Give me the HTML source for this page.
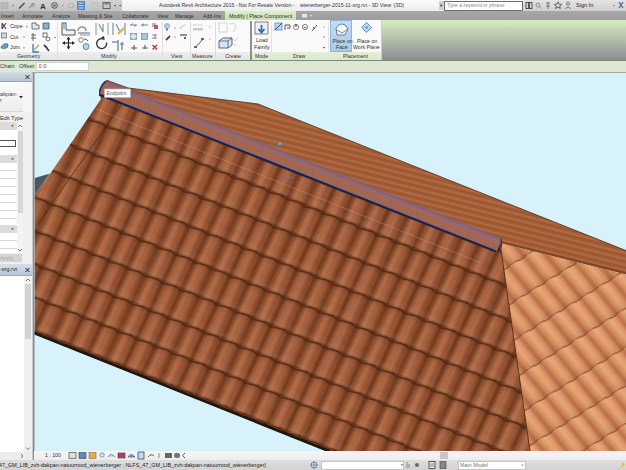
<!DOCTYPE html>
<html><head><meta charset="utf-8">
<style>
*{margin:0;padding:0;box-sizing:border-box}
html,body{width:626px;height:470px;overflow:hidden;background:#e8e8e8;font-family:"Liberation Sans",sans-serif;color:#333}
.a{position:absolute}
.t{position:absolute;white-space:nowrap;line-height:1}
</style></head><body>
<!-- title bar -->
<div class="a" style="left:0;top:0;width:626px;height:11px;background:linear-gradient(#fafafa,#ededed)"></div>
<div class="a" style="left:0;top:0;width:122px;height:11px;background:linear-gradient(#d2d2d2,#c2c2c2)"></div>
<svg class="a" style="left:0;top:0" width="130" height="11">
<rect x="1" y="2.5" width="7" height="6" fill="#b9b9b9" stroke="#aaa" stroke-width="0.6"/>
<path d="M12,5 l2,0 l-1,1.5z" fill="#666"/>
<path d="M19,8.5 L24.5,3" stroke="#444" stroke-width="1.2"/>
<path d="M29,8 L34,3.5" stroke="#777" stroke-width="1"/><circle cx="33" cy="5" r="1.6" fill="none" stroke="#888" stroke-width="0.7"/>
<text x="40" y="9" font-family="Liberation Sans" font-weight="bold" font-size="8" fill="#333">A</text>
<circle cx="54.5" cy="5.5" r="2.8" fill="none" stroke="#555" stroke-width="1"/><rect x="53.5" y="4.5" width="2" height="2" fill="#555"/>
<circle cx="63" cy="5.5" r="0.6" fill="#777"/>
<circle cx="71" cy="5.5" r="2.5" fill="none" stroke="#aaa" stroke-width="0.8"/>
<rect x="77" y="1" width="8" height="9" fill="#4f86c6"/><path d="M78.5,3 h5 M78.5,5.5 h5 M78.5,8 h5" stroke="#dfeeff" stroke-width="0.9"/>
<rect x="92" y="3" width="6" height="6" fill="none" stroke="#bbb" stroke-width="0.7"/>
<rect x="103" y="2.5" width="7" height="6" fill="none" stroke="#555" stroke-width="0.9"/><rect x="104.5" y="2.5" width="4" height="2" fill="#777"/>
<path d="M114,5 l2.4,0 l-1.2,1.6z" fill="#555"/>
<path d="M119,5 l2.4,0 l-1.2,1.6z" fill="#555"/>
</svg>
<div class="t" style="left:159px;top:2.5px;font-size:5.1px;color:#333">Autodesk Revit Architecture 2015 - Not For Resale Version -</div>
<div class="t" style="left:300px;top:2.5px;font-size:5.2px;color:#333">wienerberger-2015-11-org.rvt - 3D View: {3D}</div>
<div class="a" style="left:439px;top:1px;width:5px;height:9px;background:#d0d0d0"></div>
<svg class="a" style="left:439px;top:1px" width="5" height="9"><path d="M1.5,3 l2,1.5 l-2,1.5z" fill="#444"/></svg>
<div class="a" style="left:444px;top:0.5px;width:79px;height:10px;background:#fff;border:1px solid #6d6d6d"></div>
<div class="t" style="left:447px;top:3px;font-size:5px;color:#8a8a8a;font-style:italic">Type a keyword or phrase</div>
<div class="a" style="left:523px;top:0;width:103px;height:11px;background:linear-gradient(#e4e4e4,#cfcfcf)"></div>
<svg class="a" style="left:524px;top:0" width="100" height="11">
<rect x="2" y="2.5" width="2.6" height="6" fill="none" stroke="#444" stroke-width="0.9"/><rect x="5.4" y="2.5" width="2.6" height="6" fill="none" stroke="#444" stroke-width="0.9"/>
<circle cx="14" cy="5" r="2" fill="none" stroke="#777" stroke-width="0.8"/><path d="M15.5,6.5 l2,2" stroke="#777" stroke-width="0.9"/>
<path d="M24,2 v7 M22,3 h4 M22,6 h4" stroke="#666" stroke-width="0.8"/>
<path d="M34,1.8 l1.1,2.4 2.5,0.2 -1.9,1.6 0.6,2.5 -2.3,-1.4 -2.3,1.4 0.6,-2.5 -1.9,-1.6 2.5,-0.2z" fill="none" stroke="#444" stroke-width="0.8"/>
<circle cx="44" cy="3.6" r="1.5" fill="none" stroke="#555" stroke-width="0.8"/><path d="M41.5,8.5 q2.5,-3 5,0" fill="none" stroke="#555" stroke-width="0.8"/>
<path d="M89,5 l2,0 l-1,1.3z" fill="#666"/>
<path d="M95,2 l4,6 M99,2 l-4,6" stroke="#3b6aa8" stroke-width="1.3"/>
</svg>
<div class="t" style="left:576px;top:3px;font-size:5.6px;color:#222">Sign In</div>
<!-- tab row -->
<div class="a" style="left:0;top:11px;width:626px;height:9px;background:linear-gradient(#a7a7a7,#9c9c9c)"></div>
<div class="a" style="left:225px;top:11px;width:71px;height:9px;background:linear-gradient(#dcefc8,#c8e0b2)"></div>
<div class="t" style="left:1px;top:13.5px;font-size:5.2px;color:#2e2e2e">Insert</div>
<div class="t" style="left:22px;top:13.5px;font-size:5.2px;color:#2e2e2e">Annotate</div>
<div class="t" style="left:52px;top:13.5px;font-size:5.2px;color:#2e2e2e">Analyze</div>
<div class="t" style="left:78px;top:13.5px;font-size:5.2px;color:#2e2e2e">Massing &amp; Site</div>
<div class="t" style="left:122px;top:13.5px;font-size:5.2px;color:#2e2e2e">Collaborate</div>
<div class="t" style="left:157px;top:13.5px;font-size:5.2px;color:#2e2e2e">View</div>
<div class="t" style="left:175px;top:13.5px;font-size:5.2px;color:#2e2e2e">Manage</div>
<div class="t" style="left:203px;top:13.5px;font-size:5.2px;color:#2e2e2e">Add-Ins</div>
<div class="t" style="left:229px;top:13.5px;font-size:5.4px;color:#2e2e2e">Modify | Place Component</div>
<svg class="a" style="left:300px;top:11px" width="20" height="9"><rect x="2" y="3" width="5" height="3.5" fill="#e6e6e6"/><path d="M10,4 l2.4,0 l-1.2,1.6z" fill="#eee"/></svg>
<!-- ribbon -->
<div class="a" style="left:0;top:20px;width:626px;height:41px;background:linear-gradient(#d4ecc2 0,#cfe6bd 10%,#c4d4b6 22%,#b6c2ac 45%,#9ea19b 75%,#8c8d8b 100%)"></div>
<div class="a" style="left:0;top:20px;width:382px;height:41px;background:#fafafa"></div>
<div class="a" style="left:0;top:52px;width:251px;height:8px;background:linear-gradient(#ecebee,#e6e6e6)"></div>
<div class="a" style="left:251px;top:52px;width:131px;height:8px;background:linear-gradient(#e4eed8,#dae8cc)"></div>
<div class="a" style="left:330px;top:20px;width:22px;height:32px;background:linear-gradient(#c4dcf4,#a9c9ec);border:1px solid #8fb3dd"></div>
<div class="a" style="left:57px;top:22px;width:1px;height:37px;background:#dedede"></div>
<div class="a" style="left:162px;top:22px;width:1px;height:37px;background:#dedede"></div>
<div class="a" style="left:190px;top:22px;width:1px;height:37px;background:#dedede"></div>
<div class="a" style="left:215px;top:22px;width:1px;height:37px;background:#dedede"></div>
<div class="a" style="left:250px;top:21px;width:1.5px;height:39px;background:#8c9088"></div>
<div class="a" style="left:271px;top:22px;width:1px;height:37px;background:#e0e6da"></div>
<div class="a" style="left:328px;top:22px;width:1px;height:37px;background:#e0e6da"></div>
<div class="a" style="left:381px;top:20px;width:1px;height:41px;background:#c9d2c0"></div>
<div class="t" style="left:17px;top:54px;font-size:5.3px;color:#333">Geometry</div>
<div class="t" style="left:101px;top:54px;font-size:5.3px;color:#333">Modify</div>
<div class="t" style="left:171px;top:54px;font-size:5.3px;color:#333">View</div>
<div class="t" style="left:192px;top:54px;font-size:5.3px;color:#333">Measure</div>
<div class="t" style="left:225px;top:54px;font-size:5.3px;color:#333">Create</div>
<div class="t" style="left:255px;top:54px;font-size:5.3px;color:#333">Mode</div>
<div class="t" style="left:293px;top:54px;font-size:5.3px;color:#333">Draw</div>
<div class="t" style="left:343px;top:54px;font-size:5.3px;color:#333">Placement</div>
<div class="t" style="left:10px;top:24px;font-size:5.3px;color:#333">Cope</div>
<div class="t" style="left:10px;top:34.5px;font-size:5.3px;color:#333">Cut</div>
<div class="t" style="left:10px;top:45px;font-size:5.3px;color:#333">Join</div>
<div class="t" style="left:256px;top:38px;font-size:5.3px;color:#333">Load</div>
<div class="t" style="left:254px;top:45px;font-size:5.3px;color:#333">Family</div>
<div class="t" style="left:332.5px;top:38.5px;font-size:5.2px;color:#333">Place on</div>
<div class="t" style="left:336px;top:45px;font-size:5.2px;color:#333">Face</div>
<div class="t" style="left:357px;top:38.5px;font-size:5.2px;color:#333">Place on</div>
<div class="t" style="left:353px;top:45px;font-size:5.2px;color:#333">Work Plane</div>
<svg class="a" style="left:0;top:20px" width="382" height="33">
<!-- geometry -->
<path d="M2,3 l4,6 M6,3 l-4,6 M2,3 v6" stroke="#444" stroke-width="1.1"/>
<path d="M26,6.5 l2,0 l-1,1.2z M23,16.5 l2,0 l-1,1.2z M23,27.5 l2,0 l-1,1.2z M54,17 l2,0 l-1,1.2z" fill="#555"/>
<rect x="1.5" y="13" width="5" height="5" fill="#c9d9ea" stroke="#666" stroke-width="0.7"/>
<path d="M1,27 q3,-5 7,-3 v3 q-3,3 -7,1z" fill="#5da0c8" stroke="#3b6f98" stroke-width="0.6"/>
<path d="M32,3 h4 v2 h3 v4 h-7z" fill="#dce8f2" stroke="#555" stroke-width="0.8"/>
<path d="M43,3 h6 v6 h-6z" fill="#8ab0d0" stroke="#456" stroke-width="0.8"/>
<path d="M33,13 v8 M31,15 h5 M31,18 h5" stroke="#555" stroke-width="0.9"/>
<rect x="43" y="13" width="4" height="4" fill="none" stroke="#555" stroke-width="0.8"/><circle cx="48" cy="19" r="2" fill="none" stroke="#555" stroke-width="0.8"/>
<path d="M33,24 v8 h6" fill="none" stroke="#3a74b8" stroke-width="1.3"/><path d="M34,30 l5,-5" stroke="#8cbf40" stroke-width="1.2"/>
<path d="M44,25 l3,3 M46,27 l3,4" stroke="#444" stroke-width="1.8"/>
<!-- modify big -->
<path d="M62,3 v12 h13 v-5 h-9 v-7z" fill="#eef3f8" stroke="#555" stroke-width="1"/><rect x="63" y="4" width="3" height="5" fill="#8fc2e8"/>
<path d="M78,11 q0,-4 4,-4 q4,0 4,4 M78,13 h12" fill="none" stroke="#8a9aa8" stroke-width="1.6"/><path d="M80,15 h10" stroke="#a8b4c0" stroke-width="1.4"/>
<path d="M96,3 v12 M108,3 v12" stroke="#b0b8be" stroke-width="1.5"/><path d="M99,4 l4,8 M103,4 v8" stroke="#7c8a96" stroke-width="1.1"/>
<path d="M113,3 v12 M125,3 v12" stroke="#9aa8b8" stroke-width="1.5"/><path d="M116,4 l4,8" stroke="#7a98c0" stroke-width="1.3"/><path d="M118,14 l6,-6" stroke="#e0b040" stroke-width="2"/>
<path d="M68.5,17 v12 M62.5,23 h12" stroke="#222" stroke-width="1.2"/><path d="M68.5,17 l-2,2.5 h4z M68.5,29 l-2,-2.5 h4z M62.5,23 l2.5,-2 v4z M74.5,23 l-2.5,-2 v4z" fill="#222"/>
<circle cx="81" cy="20" r="2.3" fill="none" stroke="#667" stroke-width="0.8"/><circle cx="86" cy="26.5" r="3" fill="#b8d4ea" stroke="#4a7fae" stroke-width="0.9"/><path d="M84,19 q3,0 4,2" fill="none" stroke="#333" stroke-width="0.8"/>
<path d="M104.5,19.5 a5,5 0 1 0 2,3" fill="none" stroke="#333" stroke-width="1.4"/><path d="M101,17.5 l3,-1.5 l0.5,3z" fill="#333"/>
<path d="M112,22 h7 M118,20 v11" stroke="#8a98a8" stroke-width="1.6"/><path d="M120,24 h4 M122,22 v8" stroke="#6a7888" stroke-width="1.2"/>
<!-- modify small -->
<path d="M130,5 h7 M131,5 l2,-1.5 M136,5 l-2,1.5" stroke="#6688aa" stroke-width="1"/>
<path d="M141,5 h7 M143,3.5 v3" stroke="#6688aa" stroke-width="1"/>
<rect x="152" y="3" width="4" height="4" fill="#e8a0a8"/><rect x="154" y="5" width="4" height="4" fill="#aa6070"/>
<rect x="130.5" y="13.5" width="6" height="6" fill="#b8d0e4" stroke="#6a8aa8" stroke-width="0.7"/><path d="M133.5,13.5 v6 M130.5,16.5 h6" stroke="#fff" stroke-width="0.7"/>
<rect x="141.5" y="13.5" width="6" height="6" fill="#a8c4dc" stroke="#6a8aa8" stroke-width="0.7"/>
<path d="M152,15 h5 M152,18 h5 M155,14 v5" stroke="#777" stroke-width="0.8"/>
<path d="M131,28 h6 M134,25 v5" stroke="#556" stroke-width="1"/>
<path d="M142,28 h6 M145,25 v4" stroke="#4a6a8a" stroke-width="1.2"/>
<path d="M152.5,25 l4.5,4.5 M157,25 l-4.5,4.5" stroke="#d03030" stroke-width="1.3"/>
<!-- view -->
<circle cx="167" cy="6" r="2.5" fill="#a8d0ec" stroke="#6a9ac0" stroke-width="0.6"/><rect x="166" y="8.5" width="2" height="2" fill="#777"/>
<circle cx="175" cy="8" r="0.6" fill="#555"/><circle cx="175" cy="17" r="0.6" fill="#555"/>
<path d="M180,9 q2,-4 6,-4" fill="none" stroke="#ccc" stroke-width="1.2"/>
<path d="M166,20 l4,-4" stroke="#704030" stroke-width="1.8"/>
<path d="M180,15 h7" stroke="#444" stroke-width="1.2"/><circle cx="185" cy="18" r="1" fill="#333"/>
<!-- measure -->
<path d="M193,5 h10" stroke="#aaa" stroke-width="0.8" stroke-dasharray="1.5 1"/><rect x="193" y="8" width="10" height="2.5" fill="#ccc"/>
<circle cx="210" cy="7" r="0.6" fill="#777"/><circle cx="210" cy="19" r="0.6" fill="#777"/>
<path d="M195,28 l8,-9" stroke="#555" stroke-width="1"/><path d="M194,27 h3 M201,19 h3" stroke="#444" stroke-width="1.3"/>
<!-- create -->
<rect x="219" y="3" width="8" height="9" fill="none" stroke="#ccc" stroke-width="0.8"/>
<path d="M230,4 q3,-2 6,1 q0,5 -3,7" fill="none" stroke="#ccc" stroke-width="0.8"/>
<path d="M219,21 l4,-3 h9 v7 l-4,3 h-9z" fill="#d6e4f2" stroke="#556" stroke-width="0.9"/><path d="M219,21 h9 l4,-3 M228,21 v7" stroke="#556" stroke-width="0.8" fill="none"/>
<path d="M232,18 l3,3 M238,17 l-3,4 M233,25 h4" stroke="#ccc" stroke-width="0.8"/>
<!-- mode -->
<rect x="255" y="2" width="13" height="12" fill="#eee" stroke="#777" stroke-width="0.9"/><path d="M261.5,5 v6 M258.5,9 l3,3.5 3,-3.5" stroke="#2a6cc0" stroke-width="1.8" fill="none"/>
<!-- draw -->
<rect x="275" y="3" width="7" height="7" fill="#bcd8f0" stroke="#5a88b8" stroke-width="0.8"/><path d="M275,10 l7,-7" stroke="#2a4a7a" stroke-width="1"/>
<path d="M285,5 h5 v3 h-3 M285,5 v5" fill="none" stroke="#444" stroke-width="0.9"/>
<circle cx="296" cy="7" r="2.6" fill="none" stroke="#666" stroke-width="0.8"/><path d="M296,4 v3" stroke="#444" stroke-width="1"/>
<circle cx="305" cy="7" r="2.6" fill="none" stroke="#666" stroke-width="0.8"/><path d="M303.5,7 l3,1" stroke="#444" stroke-width="0.8"/>
<path d="M312,11 l5,-6 M313,7 l2,2" stroke="#444" stroke-width="0.9"/>
<circle cx="324" cy="7" r="0.6" fill="#666"/><circle cx="324" cy="17" r="0.7" fill="#666"/><path d="M322.8,27 h2.4 l-1.2,1.4z" fill="#444"/>
<!-- placement -->
<path d="M336,8 q4,-6 9,-3 l3,4 l-3,6 h-8 z" fill="#f4f8fc" stroke="#6a7f98" stroke-width="1"/><path d="M337,10 l5,3 l6,-4" fill="none" stroke="#6a7f98" stroke-width="0.9"/>
<path d="M366.5,2.5 l5,5 l-5,5 l-5,-5z" fill="#b9d4ee" stroke="#6a90b8" stroke-width="1"/><circle cx="366.5" cy="7.5" r="1.2" fill="#6a90b8"/>
</svg>
<!-- options bar -->
<div class="a" style="left:0;top:60px;width:626px;height:1px;background:#7c8a78"></div>
<div class="a" style="left:0;top:61px;width:626px;height:11px;background:linear-gradient(#dbe8cf,#dfe8d8)"></div>
<div class="a" style="left:0;top:72px;width:626px;height:1px;background:#a8aca6"></div>
<div class="t" style="left:0;top:64px;font-size:5.6px;color:#333">Chain</div>
<div class="t" style="left:19px;top:64px;font-size:5.6px;color:#333">Offset:</div>
<div class="a" style="left:36px;top:62px;width:53px;height:9px;background:#fff;border:1px solid #d0d0d0"></div>
<div class="t" style="left:38.5px;top:64px;font-size:5.6px;color:#555">0.0</div>
<!-- left panel -->
<div class="a" style="left:0;top:73px;width:34px;height:387px;background:#f0f0f0"></div>
<div class="a" style="left:0;top:72px;width:32px;height:9px;background:linear-gradient(#d3dde7,#b9c6d3)"></div>
<svg class="a" style="left:24px;top:73px" width="8" height="8"><path d="M1.5,2 l4,4 M5.5,2 l-4,4" stroke="#222" stroke-width="1"/></svg>
<div class="a" style="left:0;top:81px;width:32px;height:1px;background:#9aa2aa"></div>
<div class="a" style="left:0;top:82px;width:23px;height:30px;background:linear-gradient(#fbfbfb,#ececec);border-bottom:1px solid #d8d8d8"></div>
<div class="t" style="left:-3px;top:91.5px;font-size:5.6px;color:#444">dakpan-</div>
<div class="t" style="left:0;top:98px;font-size:5.6px;color:#444">r</div>
<svg class="a" style="left:18px;top:95px" width="6" height="5"><path d="M1,1 h4 l-2,2.4z" fill="#333"/></svg>
<div class="a" style="left:23px;top:82px;width:9px;height:30px;background:#f6f6f6"></div>
<div class="t" style="left:0;top:115.5px;font-size:5.6px;color:#333">Edit Type</div>
<div class="a" style="left:0;top:122px;width:17px;height:8px;background:#dcdcdc"></div>
<div class="t" style="left:11px;top:123px;font-size:5px;color:#333">&#171;</div>
<div class="a" style="left:17px;top:122px;width:6px;height:128px;background:#f3f3f3"></div>
<svg class="a" style="left:17px;top:122px" width="6" height="8"><path d="M1,5 l2,-2 l2,2" fill="none" stroke="#555" stroke-width="0.8"/></svg>
<div class="a" style="left:17.5px;top:131px;width:5px;height:82px;background:#d6d6d6"></div>
<div class="a" style="left:0;top:130px;width:17px;height:25px;background:#fff"></div>
<div class="a" style="left:0;top:139.5px;width:16px;height:7px;border:1px solid #555;border-left:none;background:#fff"></div>
<div class="a" style="left:0;top:155px;width:17px;height:8px;background:#dcdcdc"></div>
<div class="t" style="left:11px;top:156px;font-size:5px;color:#333">&#171;</div>
<div class="a" style="left:0;top:163px;width:17px;height:62px;background:repeating-linear-gradient(#fff 0,#fff 7px,#d6d6d6 7px,#d6d6d6 8px)"></div>
<div class="a" style="left:0;top:225px;width:17px;height:8px;background:#dcdcdc"></div>
<div class="t" style="left:11px;top:226px;font-size:5px;color:#333">&#171;</div>
<div class="a" style="left:0;top:233px;width:17px;height:20px;background:repeating-linear-gradient(#fff 0,#fff 7px,#d6d6d6 7px,#d6d6d6 8px)"></div>
<svg class="a" style="left:17px;top:247px" width="6" height="6"><path d="M1,2 l2,2 l2,-2" fill="none" stroke="#555" stroke-width="0.8"/></svg>
<div class="a" style="left:0;top:254px;width:22px;height:8px;background:#d5d5d5"></div>
<div class="t" style="left:0;top:255.5px;font-size:5.4px;color:#aaa">Apply</div>
<div class="a" style="left:0;top:264px;width:32px;height:11px;background:linear-gradient(#d6e0ea,#b8c6d4)"></div>
<div class="t" style="left:0;top:267px;font-size:5.4px;color:#222">-org.rvt</div>
<svg class="a" style="left:24px;top:266px" width="8" height="8"><path d="M1.5,2 l4,4 M5.5,2 l-4,4" stroke="#222" stroke-width="1"/></svg>
<div class="a" style="left:0;top:275px;width:32px;height:1px;background:#a0a8b0"></div>
<div class="a" style="left:0;top:276px;width:24px;height:176px;background:#fff"></div>
<div class="a" style="left:24px;top:276px;width:8px;height:176px;background:#f0f0f0"></div>
<svg class="a" style="left:24px;top:276px" width="8" height="8"><path d="M2,5 l2,-2 l2,2" fill="none" stroke="#555" stroke-width="0.8"/></svg>
<div class="a" style="left:25px;top:284px;width:6px;height:55px;background:#d3d3d3"></div>
<svg class="a" style="left:24px;top:446px" width="8" height="6"><path d="M2,1.5 l2,2 l2,-2" fill="none" stroke="#555" stroke-width="0.8"/></svg>
<div class="a" style="left:0;top:452px;width:33px;height:8px;background:#ececec"></div>
<svg class="a" style="left:18px;top:452px" width="8" height="8"><path d="M3,2 l2,2 l-2,2" fill="none" stroke="#555" stroke-width="0.8"/></svg>
<div class="a" style="left:32px;top:73px;width:1px;height:387px;background:#c8c8c8"></div>
<div class="a" style="left:33px;top:73px;width:1.5px;height:387px;background:#8a8a8a"></div>
<svg class="a" style="left:0;top:0" width="626" height="470" viewBox="0 0 626 470">
<defs>
<clipPath id="vc"><rect x="34.5" y="73" width="592" height="378"/></clipPath>
<filter id="bl" x="0" y="0" width="1" height="1"><feGaussianBlur stdDeviation="0.65"/></filter>
<linearGradient id="fg" x1="0" y1="0" x2="1" y2="0">
<stop offset="0" stop-color="#6e371c"/><stop offset="0.14" stop-color="#8e4c2c"/><stop offset="0.34" stop-color="#b06a44"/><stop offset="0.55" stop-color="#aa6442"/><stop offset="0.68" stop-color="#9a5634"/><stop offset="0.85" stop-color="#8e4c2c"/><stop offset="1" stop-color="#6e371c"/>
</linearGradient>
<linearGradient id="fs" x1="0" y1="0" x2="0" y2="1">
<stop offset="0" stop-color="#000" stop-opacity="0.18"/><stop offset="0.25" stop-color="#000" stop-opacity="0.03"/><stop offset="0.7" stop-color="#fff" stop-opacity="0.0"/><stop offset="0.95" stop-color="#fff" stop-opacity="0.06"/><stop offset="1" stop-color="#000" stop-opacity="0.1"/>
</linearGradient>
<pattern id="fp" patternUnits="userSpaceOnUse" width="19.4" height="31" patternTransform="translate(34.6,329) rotate(21.8) skewX(-3)">
<rect width="19.4" height="31" fill="url(#fg)"/>
<rect width="19.4" height="31" fill="url(#fs)"/>
<path d="M0,2.9 C5,2.3 10,1.3 13.8,1.2 C15.6,1.2 16.8,2.7 19.4,2.9" fill="none" stroke="#52240e" stroke-width="1.6"/>
</pattern>
<pattern id="fst" patternUnits="userSpaceOnUse" width="7.3" height="40" patternTransform="translate(34.6,329) rotate(21.8) skewX(-3)">
<rect x="1.2" width="0.9" height="40" fill="#3a1a08" opacity="0.12"/><rect x="4.6" width="0.7" height="40" fill="#fff" opacity="0.05"/>
</pattern>
<linearGradient id="bg" x1="0" y1="0" x2="0" y2="1">
<stop offset="0" stop-color="#96532f"/><stop offset="0.55" stop-color="#b36c42"/><stop offset="1" stop-color="#96532f"/>
</linearGradient>
<pattern id="bp" patternUnits="userSpaceOnUse" width="40" height="5.8" patternTransform="translate(626,250) rotate(14)">
<rect width="40" height="5.8" fill="url(#bg)"/>
</pattern>
<linearGradient id="rg" x1="0" y1="0" x2="1" y2="0">
<stop offset="0" stop-color="#b86a44"/><stop offset="0.2" stop-color="#d28858"/><stop offset="0.5" stop-color="#e8a474"/><stop offset="0.75" stop-color="#dc9464"/><stop offset="1" stop-color="#b86a44"/>
</linearGradient>
<pattern id="rp" patternUnits="userSpaceOnUse" width="18" height="32.6" patternTransform="translate(508.5,265.5) rotate(-32) skewX(7)">
<rect width="18" height="32.6" fill="url(#rg)"/>
<rect width="18" height="32.6" fill="url(#rs)"/>
<path d="M0,1 Q4.5,-1.2 9,0.4 T18,1" fill="none" stroke="#8e4a28" stroke-width="1.3"/>
</pattern>
<linearGradient id="rs" x1="0" y1="0" x2="0" y2="1">
<stop offset="0" stop-color="#fff" stop-opacity="0.08"/><stop offset="0.5" stop-color="#fff" stop-opacity="0"/><stop offset="1" stop-color="#000" stop-opacity="0.08"/>
</linearGradient>
<linearGradient id="cg" gradientUnits="userSpaceOnUse" x1="240" y1="133.6" x2="234.73" y2="146.78">
<stop offset="0" stop-color="#6c5c9c"/><stop offset="0.2" stop-color="#7a6088"/><stop offset="0.34" stop-color="#a4664a"/><stop offset="0.62" stop-color="#aa6a48"/><stop offset="0.76" stop-color="#8e5c60"/><stop offset="0.85" stop-color="#7a6aa0"/><stop offset="0.89" stop-color="#1e2450"/><stop offset="1" stop-color="#1a2046"/>
</linearGradient>
</defs>
<g clip-path="url(#vc)">
<rect x="34" y="73" width="592" height="378" fill="#d8f2fc"/>
<g filter="url(#bl)">
<!-- back plane -->
<polygon points="106,80 128,88 258,104 626,250.6 626,274.4 500,243 99,92.5" fill="url(#bp)"/>
<polyline points="106,80 128,88 258,104 626,250.6" fill="none" stroke="#5a3322" stroke-width="0.9"/>
<line x1="500" y1="242" x2="626" y2="273" stroke="#6a3820" stroke-width="2.5" opacity="0.6"/>
<!-- right plane -->
<polygon points="500,243 626,274.4 626,451 530,451" fill="url(#rp)"/>
<!-- front plane -->
<polygon points="99,92.5 500,243 530,451 329.6,451 34.6,333 34.6,195 50,174 101,99" fill="url(#fp)"/>
<polygon points="99,92.5 500,243 530,451 329.6,451 34.6,333 34.6,195 50,174 101,99" fill="url(#fst)"/>
<line x1="121" y1="105" x2="37" y2="225" stroke="#4e2412" stroke-width="1" opacity="0.75"/>
<line x1="500" y1="243" x2="530" y2="451" stroke="#5a2e18" stroke-width="1"/>
<line x1="34" y1="333" x2="330" y2="451.5" stroke="#1e120c" stroke-width="2.6"/>
<polygon points="34.6,178 50,173.5 34.6,195" fill="#4a5864"/>
<line x1="95" y1="108.5" x2="481" y2="263" stroke="#c0a8c0" stroke-width="0.8" opacity="0.45"/>
</g>
<!-- ridge -->
<g filter="url(#bl)">
<polygon points="106,81 501,239 497,251.5 99,94.5" fill="#a66646"/>
<line x1="104" y1="85" x2="500" y2="243" stroke="#8a6a98" stroke-width="3.5" opacity="0.45"/>
<line x1="106" y1="81.6" x2="501" y2="239.6" stroke="#746496" stroke-width="1.8"/>
<line x1="100" y1="92.2" x2="497" y2="249.2" stroke="#7a6aa0" stroke-width="1.2" opacity="0.8"/>
<line x1="99" y1="94.5" x2="496" y2="251.5" stroke="#1c2248" stroke-width="2.3"/>
<path d="M501,239 q3,6 -4,12.5" fill="none" stroke="#2a3058" stroke-width="1.6"/>
<path d="M106,81 q-6,5 -7,13.5" fill="none" stroke="#30305a" stroke-width="1.8"/>
<path d="M107,84 l3,5" stroke="#b06070" stroke-width="1.5" opacity="0.7"/>
</g>
<g stroke="#7a5a70" stroke-width="0.8" opacity="0.35">
<line x1="132" y1="92" x2="130" y2="104"/><line x1="158" y1="102" x2="156" y2="115"/><line x1="184" y1="113" x2="182" y2="125"/><line x1="210" y1="123" x2="208" y2="136"/><line x1="236" y1="133" x2="234" y2="146"/><line x1="262" y1="144" x2="260" y2="156"/><line x1="288" y1="154" x2="286" y2="167"/><line x1="314" y1="165" x2="312" y2="177"/><line x1="340" y1="175" x2="338" y2="188"/><line x1="366" y1="185" x2="364" y2="198"/><line x1="392" y1="196" x2="390" y2="208"/><line x1="418" y1="206" x2="416" y2="219"/><line x1="444" y1="216" x2="442" y2="229"/><line x1="470" y1="227" x2="468" y2="239"/>
</g>
<rect x="104.5" y="89" width="26" height="8.5" fill="#fff" stroke="#b8b8b8" stroke-width="0.6"/>
<text x="106.5" y="95.3" font-family="Liberation Sans" font-size="5" fill="#555">Endpoint</text>
<path d="M277,145 l3,-4 l3,4z" fill="#8aa0c0" stroke="#5a6a8a" stroke-width="0.6"/>
<path d="M283,176 l6,2 l4,-1" fill="none" stroke="#6a70a8" stroke-width="1.2"/>
</g>
</svg>
<!-- bottom -->
<div class="a" style="left:34px;top:451px;width:592px;height:9px;background:linear-gradient(#f6f6f6,#ededed)"></div>
<div class="a" style="left:440px;top:452px;width:8px;height:7px;background:#c6c6c6"></div>
<div class="t" style="left:45px;top:453px;font-size:5.2px;color:#333">1 : 100</div>
<svg class="a" style="left:60px;top:451px" width="130" height="9">
<rect x="9" y="1.5" width="7" height="6" fill="#ddd" stroke="#555" stroke-width="0.7"/>
<rect x="19" y="1.5" width="7" height="6" fill="#5a8ac0" stroke="#345" stroke-width="0.6"/>
<rect x="29" y="1.5" width="7" height="6" fill="#e8b040" stroke="#865" stroke-width="0.6"/>
<circle cx="42" cy="4" r="2.2" fill="#d8eaf8" stroke="#4a7aa8" stroke-width="0.7"/>
<path d="M48,6 q3,-5 7,0" fill="#cfd8e8" stroke="#557" stroke-width="0.7"/>
<rect x="58" y="2" width="7" height="5" fill="#b04060" stroke="#534" stroke-width="0.6"/>
<path d="M68,6 q3,-5 7,0z" fill="#8aa0c8" stroke="#446" stroke-width="0.6"/>
<rect x="78" y="1" width="6" height="7" fill="#c8d8e8" stroke="#335" stroke-width="0.7"/>
<path d="M88,6 q3,-4 6,-1" fill="none" stroke="#444" stroke-width="0.9"/>
<path d="M99,2 v5" stroke="#777" stroke-width="0.8"/>
<rect x="105" y="2" width="7" height="5" fill="#666"/>
<rect x="114" y="2" width="6" height="5" fill="#777" rx="2"/>
<path d="M125,2 l-2.5,2.5 l2.5,2.5" fill="none" stroke="#444" stroke-width="0.9"/>
</svg>
<div class="a" style="left:0;top:460px;width:626px;height:10px;background:linear-gradient(#dedede,#d2d2d2)"></div>
<div class="t" style="left:-1px;top:462.5px;font-size:5.4px;color:#222">47_GM_LIB_zvh-dakpan-natuurrood_wienerberger : NLFS_47_GM_LIB_zvh-dakpan-natuurrood_wienerberger]</div>
<svg class="a" style="left:308px;top:460px" width="12" height="10"><circle cx="6" cy="5" r="3" fill="#c8dcec" stroke="#5a7a98" stroke-width="0.8"/><path d="M6,1 v8 M2,5 h8" stroke="#5a7a98" stroke-width="0.6"/></svg>
<div class="a" style="left:321px;top:461px;width:83px;height:9px;background:#fff;border:1px solid #c4c4c4"></div>
<svg class="a" style="left:400px;top:461px" width="4" height="9"><path d="M0.5,3 h3 l-1.5,2z" fill="#999"/></svg>
<svg class="a" style="left:404px;top:460px" width="54" height="10">
<path d="M3,8 v-6 M5,8 v-4" stroke="#777" stroke-width="0.8"/>
<circle cx="13" cy="5" r="2" fill="#666"/>
<rect x="25" y="1.5" width="6" height="7" fill="#eee" stroke="#333" stroke-width="0.8"/><path d="M26,4 h4 M26,6 h4" stroke="#333" stroke-width="0.6"/>
<rect x="36" y="1.5" width="6" height="7" fill="#888" stroke="#444" stroke-width="0.6"/>
</svg>
<div class="a" style="left:458px;top:461px;width:68px;height:9px;background:#fff;border:1px solid #c4c4c4"></div>
<div class="t" style="left:460px;top:463px;font-size:5.4px;color:#777">Main Model</div>
<svg class="a" style="left:520px;top:461px" width="6" height="9"><path d="M1,3.5 h3 l-1.5,2z" fill="#aaa"/></svg>
<svg class="a" style="left:618px;top:460px" width="8" height="10"><path d="M2,8 l3,-6 l2,3z" fill="#e8c040"/></svg>
</body></html>
